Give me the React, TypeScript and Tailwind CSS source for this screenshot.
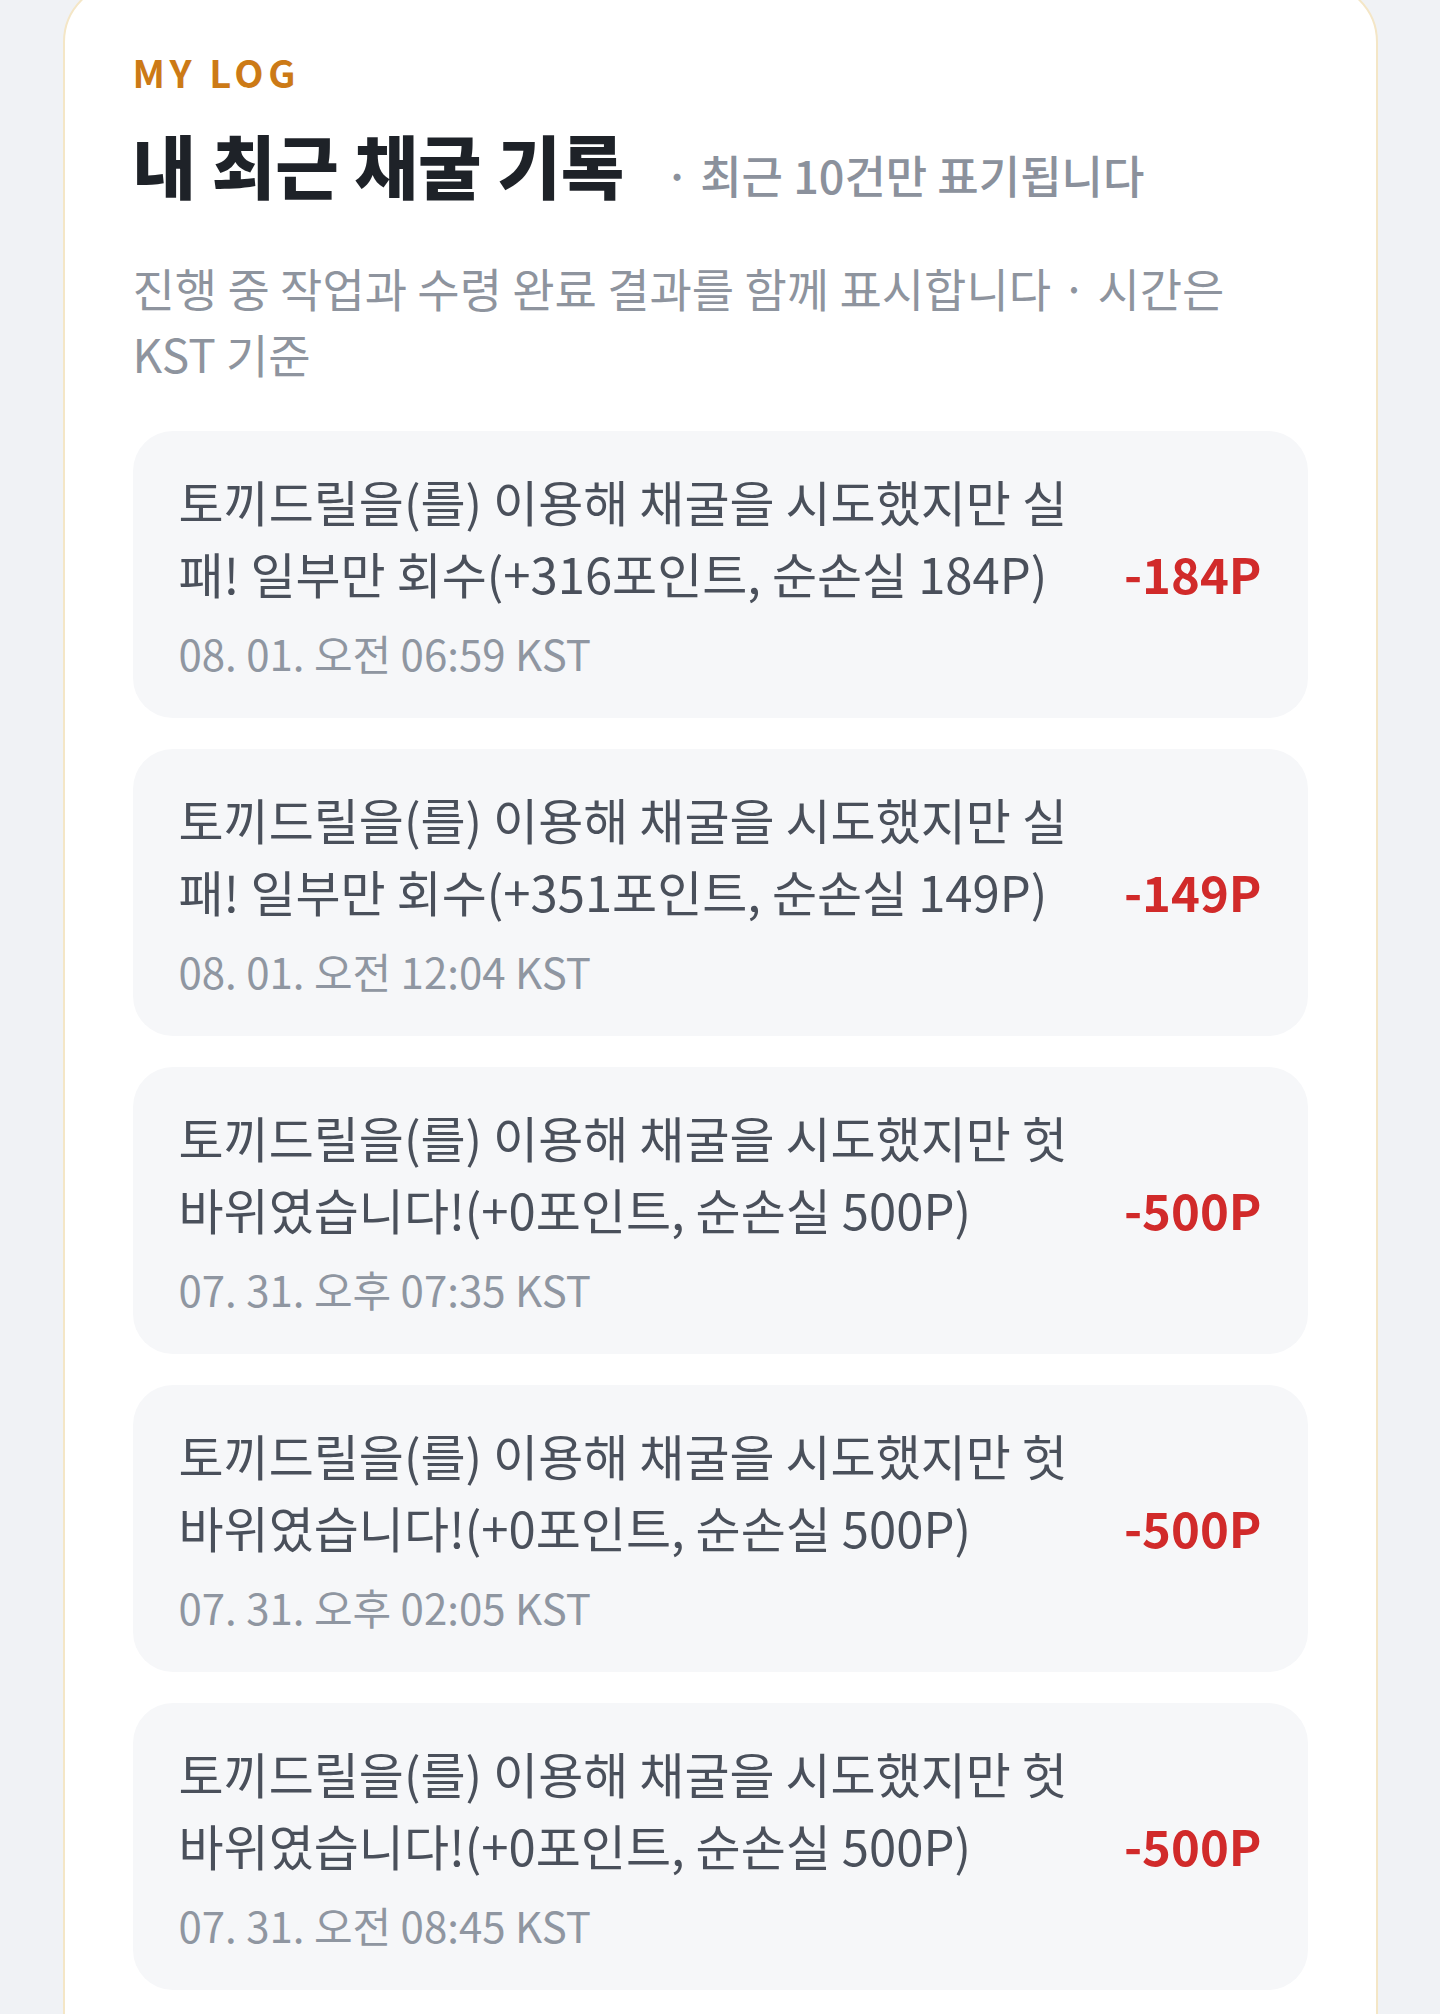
import React from "react";

type Log = { text: string; time: string; amount: string };

const logs: Log[] = [
  {
    text: "토끼드릴을(를) 이용해 채굴을 시도했지만 실패! 일부만 회수(+316포인트, 순손실 184P)",
    time: "08. 01. 오전 06:59 KST",
    amount: "-184P",
  },
  {
    text: "토끼드릴을(를) 이용해 채굴을 시도했지만 실패! 일부만 회수(+351포인트, 순손실 149P)",
    time: "08. 01. 오전 12:04 KST",
    amount: "-149P",
  },
  {
    text: "토끼드릴을(를) 이용해 채굴을 시도했지만 헛바위였습니다!(+0포인트, 순손실 500P)",
    time: "07. 31. 오후 07:35 KST",
    amount: "-500P",
  },
  {
    text: "토끼드릴을(를) 이용해 채굴을 시도했지만 헛바위였습니다!(+0포인트, 순손실 500P)",
    time: "07. 31. 오후 02:05 KST",
    amount: "-500P",
  },
  {
    text: "토끼드릴을(를) 이용해 채굴을 시도했지만 헛바위였습니다!(+0포인트, 순손실 500P)",
    time: "07. 31. 오전 08:45 KST",
    amount: "-500P",
  },
];

export default function App() {
  return (
    <div
      className="h-[2014px] w-[1440px] overflow-hidden bg-[#f0f2f5]"
      style={{ fontFamily: '"Noto Sans CJK KR", "Noto Sans", sans-serif' }}
    >
      <div className="mx-auto mt-[-18px] w-[1315px] rounded-[60px] border-2 border-[#f4e6c6] bg-white px-[68px] pt-[69px] pb-[200px]">
        <div className="text-[38px] font-bold leading-[38px] tracking-[0.12em] text-[#cc7a16]">
          MY LOG
        </div>
        <div className="mt-[35px] flex items-baseline">
          <h2 className="text-[69px] font-black leading-[77px] text-[#1e2228]">
            내 최근 채굴 기록
          </h2>
          <span className="ml-[40px] text-[45px] font-medium leading-[77px] text-[#8b919c]">
            · 최근 10건만 표기됩니다
          </span>
        </div>
        <p className="mt-[41px] w-[1110px] text-[46px] leading-[66px] text-[#8e949e]">
          진행 중 작업과 수령 완료 결과를 함께 표시합니다 · 시간은 KST 기준
        </p>
        <div className="mt-[45px] flex flex-col gap-[31px]">
          {logs.map((log, i) => (
            <div
              key={i}
              className="flex items-center gap-[32px] rounded-[40px] bg-[#f6f7f9] px-[46px] pt-[34px] pb-[37px]"
            >
              <div className="min-w-0 flex-1">
                <div className="text-[49px] leading-[72px] text-[#4a505b]">
                  {log.text}
                </div>
                <div className="mt-[16px] text-[42px] leading-[56px] text-[#8f96a1]">
                  {log.time}
                </div>
              </div>
              <div className="shrink-0 text-[49px] font-bold leading-[60px] text-[#d12a2a]">
                {log.amount}
              </div>
            </div>
          ))}
        </div>
      </div>
    </div>
  );
}
